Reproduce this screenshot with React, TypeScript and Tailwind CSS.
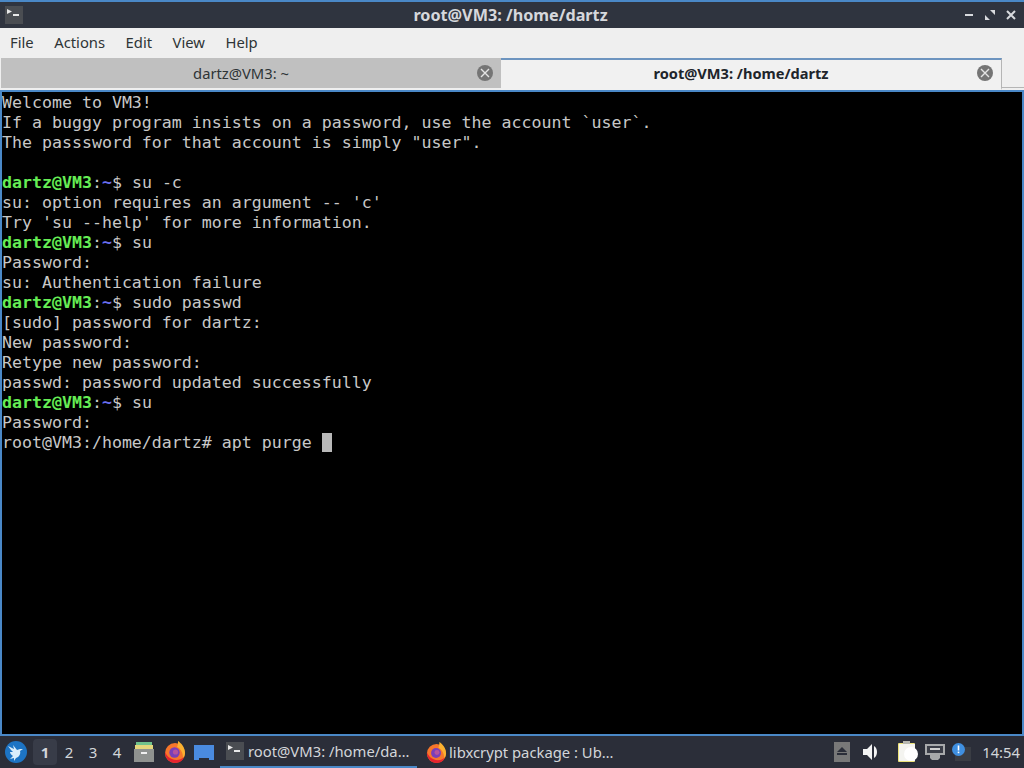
import React from "react";

const G = ({ t }: { t: string }) => (
  <div className="h-5 whitespace-pre">{t}</div>
);
const P = ({ c }: { c: string }) => (
  <div className="h-5 whitespace-pre">
    <span className="font-bold text-[#66ee55]">dartz@VM3</span>
    <span>:</span>
    <span className="font-bold text-[#6a6ef0]">~</span>
    <span>$ {c}</span>
  </div>
);

const TermIcon = ({ s }: { s: number }) => (
  <svg width={s} height={s} viewBox="0 0 18 18" className="shrink-0">
    <rect width="18" height="18" fill="#4a4d52" />
    <path d="M2 3l5 2.5L2 8" fill="#e8e8e8" />
    <rect x="8" y="8" width="6" height="2" fill="#e8e8e8" />
  </svg>
);

const CloseBadge = () => (
  <svg width="16" height="16" viewBox="0 0 16 16" className="shrink-0">
    <circle cx="8" cy="8" r="8" fill="#757575" />
    <path d="M4 4l8 8M12 4l-8 8" stroke="#e4e4e4" strokeWidth="1.4" />
  </svg>
);

const Firefox = ({ s }: { s: number }) => (
  <svg width={s} height={s} viewBox="0 0 22 22" className="shrink-0">
    <circle cx="11" cy="12" r="10" fill="#f7762b" />
    <path d="M14 0c3 2 7 6 7 12 0 2-1 4-2 5 0-5-2-9-6-11 1-2 1-4 1-6z" fill="#fbb130" />
    <path d="M1 11c0 7 5 11 10 11s8-3 9-6c-3 3-8 4-12 2-3-1-5-3-7-7z" fill="#e6232f" />
    <circle cx="10.5" cy="11.5" r="5.2" fill="#7a3fb8" />
    <circle cx="11.5" cy="11" r="2.6" fill="#b6529e" />
  </svg>
);

const Bird = () => (
  <svg width="22" height="22" viewBox="0 0 22 22" className="shrink-0">
    <circle cx="11" cy="11" r="11" fill="#1d74c4" />
    <path d="M3 5l6 3-1-4 4 5 3-1 3 0-3 2c1 3-1 6-4 7l-2 3 0-3-4 1 3-3c-2-1-3-3-3-4l3 0-2-2z" fill="#dbeefb" />
  </svg>
);

export default function App() {
  return (
    <div className="flex h-[768px] w-[1024px] flex-col overflow-hidden bg-[#2b2e39] font-['Noto_Sans',sans-serif]">
      <div className="h-[2px] shrink-0 bg-[#4a88c7]" />
      <div className="flex h-[26px] shrink-0 items-center bg-[#2f343f] pl-[5px] pr-[8px]">
        <div className="flex-1"><TermIcon s={18} /></div>
        <div className="text-[16.2px] font-bold text-[#d6d8dc]">root@VM3: /home/dartz</div>
        <div className="flex flex-1 items-center justify-end gap-[11px]">
          <svg width="10" height="10" viewBox="0 0 10 10"><rect x="1" y="4" width="8" height="2" fill="#d8dade" /></svg>
          <svg width="10" height="10" viewBox="0 0 10 10"><path d="M5 0h5v5zM0 5l5 5H0z" fill="#d8dade" /></svg>
          <svg width="10" height="10" viewBox="0 0 10 10"><path d="M1 1l8 8M9 1l-8 8" stroke="#d8dade" strokeWidth="2" /></svg>
        </div>
      </div>
      <div className="flex h-[30px] shrink-0 items-center gap-[20.5px] bg-[#efefef] pb-[2px] pl-[10px] text-[14.8px] text-[#2e3436]">
        <span>File</span>
        <span>Actions</span>
        <span>Edit</span>
        <span>View</span>
        <span>Help</span>
      </div>
      <div className="flex h-[32px] shrink-0 items-stretch bg-[#efefef] pl-px">
        <div className="relative flex w-[500px] items-center justify-center border-b-2 border-[#efefef] bg-[#c0c0c0] text-[14.75px] text-[#2e3436]">
          <span className="mr-[20px]">dartz@VM3: ~</span>
          <div className="absolute right-[8px] top-[7px]"><CloseBadge /></div>
        </div>
        <div className="relative flex w-[501px] items-center justify-center border-t-2 border-r border-b-2 border-[#6d94bf] border-r-[#b5b5b5] border-b-[#f1f1f1] bg-[#f1f1f1] text-[14.6px] font-bold text-[#20242a]">
          <span className="mr-[20px]">root@VM3: /home/dartz</span>
          <div className="absolute right-[8px] top-[5px]"><CloseBadge /></div>
        </div>
        <div className="flex-1 pt-[29px]"><div className="h-px bg-[#b5b5b5]" /></div>
      </div>
      <div className="min-h-0 flex-1 border-2 border-[#4a88c7] bg-black pt-px font-['DejaVu_Sans_Mono',monospace] text-[16.6px] leading-5 text-[#c8c8c8]">
        <G t="Welcome to VM3!" />
        <G t="If a buggy program insists on a password, use the account `user`." />
        <G t={'The passsword for that account is simply "user".'} />
        <G t=" " />
        <P c="su -c" />
        <G t="su: option requires an argument -- 'c'" />
        <G t="Try 'su --help' for more information." />
        <P c="su" />
        <G t="Password:" />
        <G t="su: Authentication failure" />
        <P c="sudo passwd" />
        <G t="[sudo] password for dartz:" />
        <G t="New password:" />
        <G t="Retype new password:" />
        <G t="passwd: password updated successfully" />
        <P c="su" />
        <G t="Password:" />
        <div className="flex h-5 items-start whitespace-pre">
          <span>root@VM3:/home/dartz# apt purge </span>
          <span className="h-[19px] w-[10px] bg-[#b9b9b9]" />
        </div>
      </div>
      <div className="flex h-[32px] shrink-0 items-center bg-[#2b2e39] text-[#d3d6da]">
        <div className="ml-[5px]"><Bird /></div>
        <div className="ml-[6px] flex items-center text-[15px]">
          <span className="flex h-[26px] w-[24px] items-center justify-center rounded-sm bg-[#383c48] font-bold">1</span>
          <span className="flex w-[24px] justify-center">2</span>
          <span className="flex w-[24px] justify-center">3</span>
          <span className="flex w-[24px] justify-center">4</span>
        </div>
        <svg width="22" height="22" viewBox="0 0 22 22" className="ml-[4px] shrink-0">
          <rect x="3" y="1" width="16" height="3" fill="#6fc28c" />
          <rect x="2" y="4" width="18" height="4" fill="#e4d77c" />
          <rect x="1" y="8" width="20" height="13" fill="#8f9290" />
          <rect x="8" y="11" width="6" height="2" fill="#f0f0f0" />
        </svg>
        <div className="ml-[9px]"><Firefox s={22} /></div>
        <svg width="22" height="20" viewBox="0 0 22 20" className="ml-[7px] shrink-0">
          <path d="M1 3h20v15h-5v-2H6v2H1z" fill="#4a8be0" />
        </svg>
        <div className="ml-[5px] flex h-[32px] w-[197px] items-center gap-[4px] border-b-2 border-[#4a88c7] pl-[6px] text-[14.8px]">
          <TermIcon s={18} />
          <span className="whitespace-nowrap">root@VM3: /home/da…</span>
        </div>
        <div className="flex h-[32px] w-[200px] items-center gap-[2px] pl-[9px] text-[14.8px]">
          <Firefox s={21} />
          <span className="whitespace-nowrap">libxcrypt package : Ub…</span>
        </div>
        <div className="flex-1" />
        <svg width="16" height="20" viewBox="0 0 16 20" className="shrink-0">
          <rect width="16" height="20" fill="#787878" />
          <path d="M8 5l5 5H3z" fill="#2b2e39" />
          <rect x="3" y="11" width="10" height="2" fill="#2b2e39" />
        </svg>
        <svg width="18" height="18" viewBox="0 0 18 18" className="ml-[12px] shrink-0">
          <path d="M1 6h4l5-5v16l-5-5H1z" fill="#f4f4f4" />
          <path d="M12 3c4 2 4 10 0 12z" fill="#f4f4f4" />
        </svg>
        <svg width="20" height="22" viewBox="0 0 20 22" className="ml-[18px] shrink-0">
          <rect x="0" y="2" width="17" height="19" rx="1" fill="#ece27a" />
          <rect x="1" y="3" width="16" height="17" fill="#f4f4f0" />
          <rect x="5" y="0" width="7" height="3" fill="#b8b8b0" />
          <circle cx="13" cy="13" r="7" fill="#ffffff" />
        </svg>
        <svg width="20" height="16" viewBox="0 0 20 16" className="ml-[7px] shrink-0">
          <path d="M0 0h20v11h-5v3l-2 2H7l-2-2v-3H0z" fill="#a7a9ab" />
          <rect x="2" y="2" width="16" height="7" fill="#3b3e48" />
          <rect x="5" y="4" width="10" height="2" fill="#d0d0d0" />
        </svg>
        <svg width="19" height="18" viewBox="0 0 19 18" className="ml-[7px] shrink-0">
          <rect x="3" y="4" width="16" height="14" fill="#3a3d44" />
          <circle cx="6.5" cy="6.5" r="6.5" fill="#3f8fe0" />
          <rect x="5.7" y="2.5" width="1.6" height="5" fill="#fff" />
          <rect x="5.7" y="8.6" width="1.6" height="1.6" fill="#fff" />
        </svg>
        <span className="ml-[11px] mr-[4px] text-[14.8px] whitespace-nowrap">14:54</span>
      </div>
    </div>
  );
}
